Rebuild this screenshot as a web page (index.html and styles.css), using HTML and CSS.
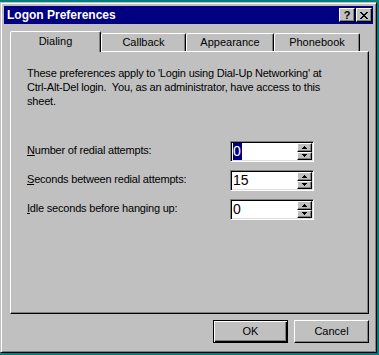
FILE: index.html
```html
<!DOCTYPE html>
<html lang="en">
<head>
    <meta charset="UTF-8">
    <meta name="viewport" content="width=device-width, initial-scale=1.0">
    <title>Logon Preferences</title>
    <link rel="stylesheet" href="styles.css">
</head>
<body>
    <div class="window">
        <div class="titlebar">
            <span class="title">Logon Preferences</span>
            <div class="caption-buttons">
                <button type="button" class="cap-btn help">?</button>
                <button type="button" class="cap-btn">
                    <svg width="8" height="7" viewBox="0 0 8 7" shape-rendering="crispEdges">
                        <path d="M0 0h2v1H0zM6 0h2v1H6zM1 1h2v1H1zM5 1h2v1H5zM2 2h4v1H2zM3 3h2v1H3zM2 4h4v1H2zM1 5h2v1H1zM5 5h2v1H5zM0 6h2v1H0zM6 6h2v1H6z"/>
                    </svg>
                </button>
            </div>
        </div>

        <div class="client">
            <!-- Abas -->
            <div class="tabs">
                <div class="tab selected" style="width: 91px">Dialing</div>
                <div class="tab" style="width: 85px">Callback</div>
                <div class="tab" style="width: 88px">Appearance</div>
                <div class="tab" style="width: 86px">Phonebook</div>
            </div>

            <div class="panel">
                <p class="intro">These preferences apply to 'Login using Dial-Up Networking' at Ctrl-Alt-Del login.&nbsp; You, as an administrator, have access to this sheet.</p>

                <div class="fields">
                    <div class="field">
                        <label><u>N</u>umber of redial attempts:</label>
                        <div class="spin">
                            <span class="value"><span class="sel">0</span></span>
                            <div class="arrows">
                                <span class="arrow"><svg width="5" height="3" shape-rendering="crispEdges"><path d="M2 0h1v1h1v1h1v1H0V2h1V1h1z"/></svg></span>
                                <span class="arrow"><svg width="5" height="3" shape-rendering="crispEdges"><path d="M0 0h5v1H4v1H3v1H2V2H1V1H0z"/></svg></span>
                            </div>
                        </div>
                    </div>
                    <div class="field">
                        <label><u>S</u>econds between redial attempts:</label>
                        <div class="spin">
                            <span class="value">15</span>
                            <div class="arrows">
                                <span class="arrow"><svg width="5" height="3" shape-rendering="crispEdges"><path d="M2 0h1v1h1v1h1v1H0V2h1V1h1z"/></svg></span>
                                <span class="arrow"><svg width="5" height="3" shape-rendering="crispEdges"><path d="M0 0h5v1H4v1H3v1H2V2H1V1H0z"/></svg></span>
                            </div>
                        </div>
                    </div>
                    <div class="field">
                        <label><u>I</u>dle seconds before hanging up:</label>
                        <div class="spin">
                            <span class="value">0</span>
                            <div class="arrows">
                                <span class="arrow"><svg width="5" height="3" shape-rendering="crispEdges"><path d="M2 0h1v1h1v1h1v1H0V2h1V1h1z"/></svg></span>
                                <span class="arrow"><svg width="5" height="3" shape-rendering="crispEdges"><path d="M0 0h5v1H4v1H3v1H2V2H1V1H0z"/></svg></span>
                            </div>
                        </div>
                    </div>
                </div>
            </div>

            <!-- Botoes -->
            <div class="actions">
                <button type="button" class="btn default">OK</button>
                <button type="button" class="btn">Cancel</button>
            </div>
        </div>
    </div>
</body>
</html>
```

FILE: styles.css
```css
/* Fundo da area de trabalho */
body {
    margin: 0;
    padding-top: 2px;
    height: 355px;
    box-sizing: border-box;
    overflow: hidden;
    background-color: #008080;
    font-family: 'Liberation Sans', Arial, sans-serif;
    font-size: 11px;
    color: #000;
}

/* Janela */
.window {
    width: 377px;
    height: 351px;
    box-sizing: border-box;
    background-color: #c0c0c0;
    border: 1px solid;
    border-color: #c0c0c0 #000 #000 #c0c0c0;
    box-shadow: inset 1px 1px #fff, inset -1px -1px #808080;
    padding: 3px;
}

/* Barra de titulo */
.titlebar {
    height: 18px;
    background-color: #000080;
    color: #fff;
    display: flex;
    align-items: center;
    justify-content: space-between;
    padding: 0 1px 0 3px;
}

.title {
    font-weight: bold;
    font-size: 12px;
}

.caption-buttons {
    display: flex;
    gap: 1px;
}

.cap-btn {
    width: 16px;
    height: 14px;
    box-sizing: border-box;
    padding: 0;
    background-color: #c0c0c0;
    border: 1px solid;
    border-color: #fff #000 #000 #fff;
    box-shadow: inset -1px -1px #808080;
    display: flex;
    align-items: center;
    justify-content: center;
    font-family: 'Liberation Sans', Arial, sans-serif;
    font-weight: bold;
    font-size: 11px;
    color: #000;
}

.cap-btn svg {
    display: block;
    margin-top: 1px;
}

/* Abas */
.tabs {
    display: flex;
    align-items: flex-end;
    height: 20px;
    margin: 7px 0 0 6px;
}

.tab {
    height: 18px;
    box-sizing: border-box;
    border: 1px solid;
    border-bottom: none;
    border-color: #fff #000 transparent #fff;
    border-radius: 2px 2px 0 0;
    box-shadow: inset -1px 0 #808080;
    padding-top: 2px;
    line-height: 13px;
    text-align: center;
    background-color: #c0c0c0;
}

.tab.selected {
    height: 21px;
    margin-bottom: -1px;
    padding-top: 3px;
    position: relative;
    z-index: 1;
}

/* Painel */
.panel {
    width: 359px;
    height: 263px;
    box-sizing: border-box;
    margin-left: 6px;
    border: 1px solid;
    border-color: #fff #000 #000 #fff;
    box-shadow: inset -1px -1px #808080;
    padding: 14px 16px 0 16px;
    letter-spacing: -0.2px;
}

.intro {
    margin: 0;
    width: 312px;
    line-height: 14px;
}

.fields {
    margin-top: 33px;
}

.field {
    display: flex;
    align-items: flex-start;
    height: 21px;
    margin-bottom: 8px;
}

.field label {
    width: 203px;
    padding-top: 3px;
    line-height: 13px;
}

/* Campo com setas */
.spin {
    width: 84px;
    height: 21px;
    box-sizing: border-box;
    border: 1px solid;
    border-color: #808080 #fff #fff #808080;
    box-shadow: inset 1px 1px #000, inset -1px -1px #dfdfdf;
    padding: 1px;
    background-color: #fff;
    display: flex;
    letter-spacing: 0;
}

.value {
    flex: 1;
    padding-left: 1px;
    font-size: 14px;
    line-height: 17px;
}

.sel {
    background-color: #000080;
    color: #fff;
    display: inline-block;
    padding: 0 1px 0 0;
}

.arrows {
    width: 15px;
    display: flex;
    flex-direction: column;
}

.arrow {
    flex: 1;
    box-sizing: border-box;
    background-color: #c0c0c0;
    border: 1px solid;
    border-color: #fff #000 #000 #fff;
    box-shadow: inset -1px -1px #808080;
    display: flex;
    align-items: center;
    justify-content: center;
}

.arrow svg {
    display: block;
}

/* Botoes */
.actions {
    display: flex;
    justify-content: flex-end;
    gap: 6px;
    margin-top: 6px;
    padding-right: 4px;
}

.btn {
    width: 75px;
    height: 23px;
    box-sizing: border-box;
    padding: 0;
    background-color: #c0c0c0;
    border: 1px solid;
    border-color: #fff #000 #000 #fff;
    box-shadow: inset -1px -1px #808080;
    font-family: 'Liberation Sans', Arial, sans-serif;
    font-size: 11px;
    line-height: 13px;
    color: #000;
}

.btn.default {
    border-color: #000;
    box-shadow: inset 1px 1px #fff, inset -1px -1px #000, inset -2px -2px #808080;
}
```
